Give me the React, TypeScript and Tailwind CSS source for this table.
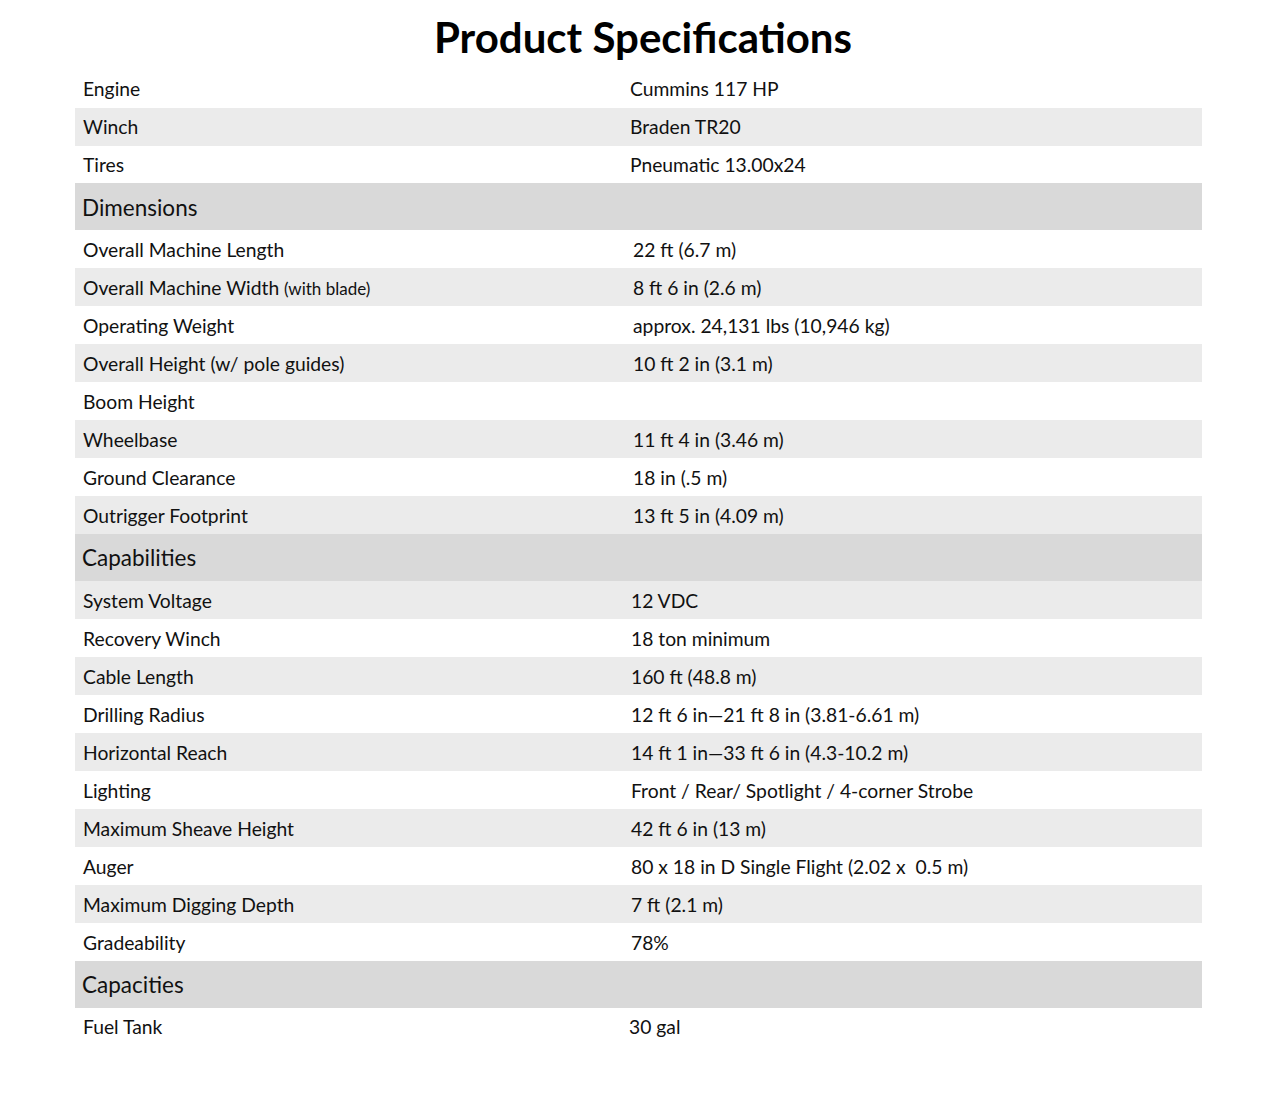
import React from "react";

type Row = { label: React.ReactNode; value: string; gray?: boolean };

const top: Row[] = [
  { label: "Engine", value: "Cummins 117 HP" },
  { label: "Winch", value: "Braden TR20", gray: true },
  { label: "Tires", value: "Pneumatic 13.00x24" },
];

const dims: Row[] = [
  { label: "Overall Machine Length", value: "22 ft (6.7 m)" },
  {
    label: (
      <>
        Overall Machine Width <span className="text-[17px]">(with blade)</span>
      </>
    ),
    value: "8 ft 6 in (2.6 m)",
    gray: true,
  },
  { label: "Operating Weight", value: "approx. 24,131 lbs (10,946 kg)" },
  { label: "Overall Height (w/ pole guides)", value: "10 ft 2 in (3.1 m)", gray: true },
  { label: "Boom Height", value: "" },
  { label: "Wheelbase", value: "11 ft 4 in (3.46 m)", gray: true },
  { label: "Ground Clearance", value: "18 in (.5 m)" },
  { label: "Outrigger Footprint", value: "13 ft 5 in (4.09 m)", gray: true },
];

const caps: Row[] = [
  { label: "System Voltage", value: "12 VDC", gray: true },
  { label: "Recovery Winch", value: "18 ton minimum" },
  { label: "Cable Length", value: "160 ft (48.8 m)", gray: true },
  { label: "Drilling Radius", value: "12 ft 6 in\u201421 ft 8 in (3.81-6.61 m)" },
  { label: "Horizontal Reach", value: "14 ft 1 in\u201433 ft 6 in (4.3-10.2 m)", gray: true },
  { label: "Lighting", value: "Front / Rear/ Spotlight / 4-corner Strobe" },
  { label: "Maximum Sheave Height", value: "42 ft 6 in (13 m)", gray: true },
  { label: "Auger", value: "80 x 18 in D Single Flight (2.02 x  0.5 m)" },
  { label: "Maximum Digging Depth", value: "7 ft (2.1 m)", gray: true },
  { label: "Gradeability", value: "78%" },
];

const fuel: Row[] = [{ label: "Fuel Tank", value: "30 gal" }];

function Rows({ rows, valuePad, h, pt }: { rows: Row[]; valuePad: string; h: string; pt: string }) {
  return (
    <>
      {rows.map((r, i) => (
        <div
          key={i}
          className={`flex items-center ${pt} ${h} ${r.gray ? "bg-[#ebebeb]" : "bg-white"}`}
        >
          <div className="w-[547px] pl-[8px] whitespace-nowrap">{r.label}</div>
          <div className={`${valuePad} whitespace-pre`}>{r.value}</div>
        </div>
      ))}
    </>
  );
}

function Header({ title }: { title: string }) {
  return (
    <div className="flex items-center h-[47px] pt-[2px] bg-[#d9d9d9] pl-[7px] text-[22.5px]">{title}</div>
  );
}

export default function App() {
  return (
    <div
      className="w-[1275px] h-[1094px] bg-white text-[#111] text-[19.3px]"
      style={{ fontFamily: "Lato, 'Open Sans', sans-serif" }}
    >
      <h1 className="pl-[11px] pt-[11px] h-[70px] text-center text-[42px] font-bold leading-[52px] text-black">
        Product Specifications
      </h1>
      <div className="ml-[75px] w-[1127px]">
        <Rows rows={top} valuePad="pl-[8px]" h="h-[37.8px]" pt="pt-[1px]" />
        <Header title="Dimensions" />
        <Rows rows={dims} valuePad="pl-[11px]" h="h-[37.9px]" pt="pt-[3px]" />
        <Header title="Capabilities" />
        <Rows rows={caps} valuePad="pl-[9px]" h="h-[38px]" pt="pt-[3px]" />
        <Header title="Capacities" />
        <Rows rows={fuel} valuePad="pl-[7px]" h="h-[38px]" pt="pt-[2px]" />
      </div>
    </div>
  );
}
